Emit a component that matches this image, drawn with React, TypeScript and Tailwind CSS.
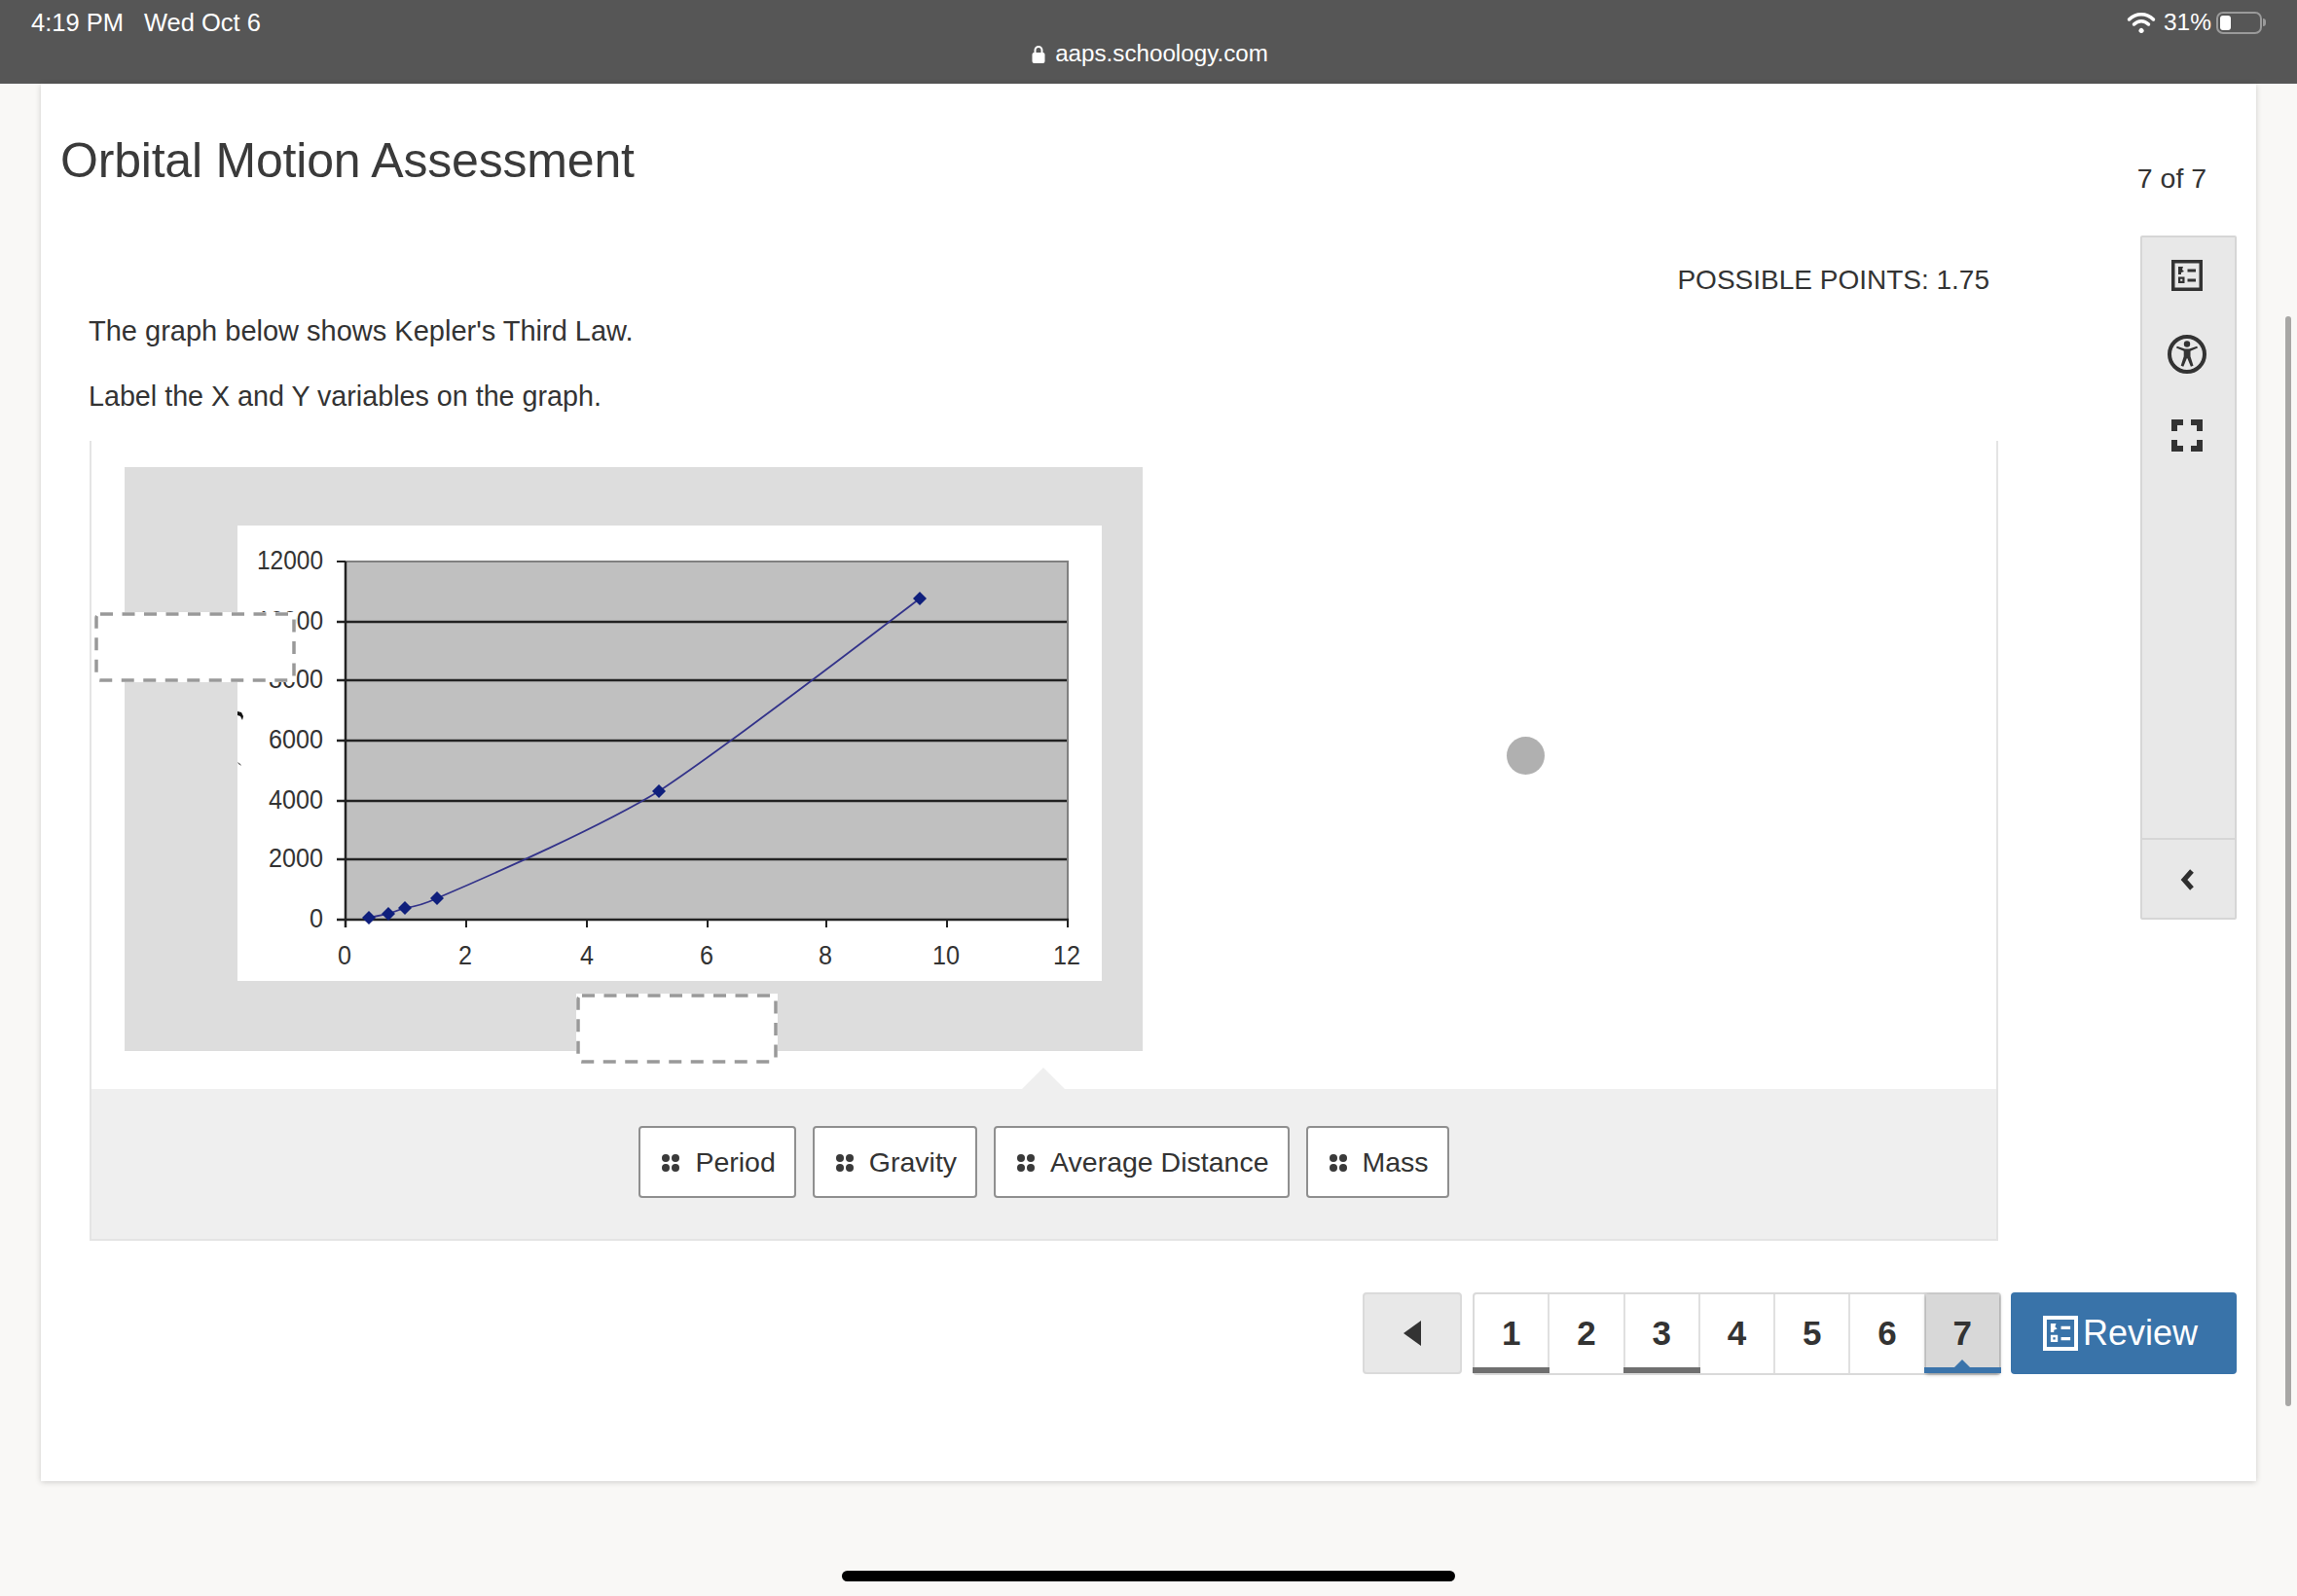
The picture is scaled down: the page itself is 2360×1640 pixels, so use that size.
const pages = [
  { n: 1, bar: 'gray' },
  { n: 2 },
  { n: 3, bar: 'gray' },
  { n: 4 },
  { n: 5 },
  { n: 6 },
  { n: 7, current: true },
];

const chips = ['Period', 'Gravity', 'Average Distance', 'Mass'];

const yLabels = [
  { t: '12000', y: 575, w: 68 },
  { t: '10000', y: 637, w: 68 },
  { t: '8000', y: 697, w: 56 },
  { t: '6000', y: 759, w: 56 },
  { t: '4000', y: 821, w: 56 },
  { t: '2000', y: 881, w: 56 },
  { t: '0', y: 943, w: 14 },
];

const xLabels = [
  { t: '0', x: 354, w: 14 },
  { t: '2', x: 478, w: 14 },
  { t: '4', x: 603, w: 14 },
  { t: '6', x: 726, w: 14 },
  { t: '8', x: 848, w: 14 },
  { t: '10', x: 972, w: 28 },
  { t: '12', x: 1096, w: 28 },
];

const markers = [
  [379, 943],
  [399, 939],
  [416, 933],
  [449, 923],
  [677, 813],
  [945, 615],
];

const ListIcon = ({ className }: { className: string }) => (
  <svg viewBox="0 0 32 32" className={className} fill="currentColor">
    <path fillRule="evenodd" d="M0 0h32v32H0zM3.500 3.500v25h25v-25z" />
    <path d="M7 7h5l-1 3 2 2-3 1v2H7z" />
    <path d="M16.500 9.500h8.500v3h-8.500zM16.500 19.500h8.500v3h-8.500z" />
    <path fillRule="evenodd" d="M7 17.500h6.500V24H7zM9.200 19.700v2.100h2.100v-2.100z" />
  </svg>
);

const DropZone = ({ className }: { className: string }) => (
  <div className={`absolute w-[207px] h-[72px] bg-white ${className}`}>
    <svg width="207" height="72" className="block">
      <rect x="2" y="2" width="203" height="68" rx="4" fill="none" stroke="#999999" strokeWidth="3.500" strokeDasharray="13 9.500" />
    </svg>
  </div>
);

const Chart = () => (
  <svg width="888" height="468" viewBox="244 540 888 468" className="block bg-white" style={{ fontFamily: '"Liberation Sans", Arial, sans-serif' }}>
    <rect x="355" y="577" width="742" height="368" fill="#c0c0c0" stroke="#808080" strokeWidth="2" />
    {[639, 699, 761, 823, 883].map((y) => (
      <line key={y} x1="346" x2="1096" y1={y} y2={y} stroke="#222222" strokeWidth="2.500" />
    ))}
    <line x1="346" x2="355" y1="577" y2="577" stroke="#222222" strokeWidth="2" />
    <line x1="346" x2="1098" y1="945" y2="945" stroke="#222222" strokeWidth="2.500" />
    <line x1="355" x2="355" y1="577" y2="953" stroke="#222222" strokeWidth="2.500" />
    {[355, 479, 603, 727, 849, 973, 1097].map((x) => (
      <line key={x} x1={x} x2={x} y1="945" y2="953" stroke="#222222" strokeWidth="2" />
    ))}
    {yLabels.map((l) => (
      <text key={l.t} x={332} y={l.y + 10} textAnchor="end" fontSize="28" fill="#333333" textLength={l.w} lengthAdjust="spacingAndGlyphs">
        {l.t}
      </text>
    ))}
    {xLabels.map((l) => (
      <text key={l.x} x={l.x} y={991} textAnchor="middle" fontSize="28" fill="#333333" textLength={l.w} lengthAdjust="spacingAndGlyphs">
        {l.t}
      </text>
    ))}
    <path
      d="M379 943L399 939L416 933Q432 931 449 923C510 897 620 848 677 813C730 778 860 680 945 615"
      fill="none"
      stroke="#33338a"
      strokeWidth="1.800"
    />
    {markers.map(([x, y]) => (
      <path key={x} d={`M${x} ${y - 7}L${x + 7} ${y}L${x} ${y + 7}L${x - 7} ${y}Z`} fill="#0f1f7c" />
    ))}
    <path d="M244 731l4 1 2 4-1 4-2-4-3-1z" fill="#111111" />
    <path d="M244 783l3 2 1 2-3-2z" fill="#555555" />
  </svg>
);

export default function App() {
  return (
    <div className="relative w-[2360px] h-[1640px] overflow-hidden bg-[#f9f8f6] text-[#333333] font-['Liberation_Sans',Arial,sans-serif]">
      {/* status bar */}
      <div className="h-[86px] bg-[#565656] text-white text-[25.500px] flex flex-col">
        <div className="flex justify-between h-[41px] pl-[32px] pr-[32px] pt-[8px] leading-[30px]">
          <div className="flex gap-[21px]">
            <span>4:19 PM</span>
            <span>Wed Oct 6</span>
          </div>
          <div className="flex items-center gap-[8px] h-[30px]">
            <svg width="30" height="22" viewBox="0 0 30 22" fill="none" stroke="white" strokeWidth="3.500" strokeLinecap="round">
              <path d="M2.500 8c7-7 18-7 25 0" />
              <path d="M7.500 13c4.500-4.500 10.500-4.500 15 0" />
              <path d="M15 19.500l.1.1" strokeWidth="5" />
            </svg>
            <span className="text-[24.500px]">31%</span>
            <div className="flex items-center -ml-[3px]">
              <div className="w-[47px] h-[23px] border-2 border-[#9a9a9a] rounded-[7px] p-[2px]">
                <div className="w-[11px] h-full bg-white rounded-[3px]" />
              </div>
              <div className="w-[3px] h-[8px] bg-[#9a9a9a] rounded-r-full ml-[1px]" />
            </div>
          </div>
        </div>
        <div className="flex justify-center items-center gap-[10px] pl-[3px] text-[24.200px] leading-[28px]">
          <svg width="14" height="19" viewBox="0 0 14 19">
            <path d="M3.500 9V5.500a3.500 3.500 0 0 1 7 0V9" fill="none" stroke="white" strokeWidth="2" />
            <rect x="0.500" y="8" width="13" height="11" rx="2" fill="white" />
          </svg>
          <span>aaps.schoology.com</span>
        </div>
      </div>

      {/* card */}
      <div className="ml-[42px] w-[2276px] h-[1436px] bg-white shadow-[0_1px_6px_rgba(0,0,0,0.18)] pl-[20px] pr-[20px] flex flex-col">
        <div className="h-[156px] flex justify-between">
          <h1 className="mt-[49px] text-[50px] leading-[60px] text-[#3a3a3a] tracking-[-0.2px]">Orbital Motion Assessment</h1>
          <div className="mt-[79px] mr-[17px] w-[99px] text-center text-[28.500px] leading-[36px]">7 of 7</div>
        </div>

        <div className="flex justify-between items-start">
          <div className="ml-[29px] w-[1962px]">
            <div className="mt-[30px] pr-[9px] text-right text-[28px] leading-[32px]">POSSIBLE POINTS: 1.75</div>
            <p className="mt-[20px] text-[29px] leading-[32px]">The graph below shows Kepler's Third Law.</p>
            <p className="mt-[35px] text-[28.700px] leading-[32px]">Label the X and Y variables on the graph.</p>

            <div className="mt-[30px] ml-[1px] w-[1961px] border-x-2 border-b-2 border-[#e4e4e4]">
              <div className="relative h-[666px] pt-[27px] pl-[34px]">
                <div className="relative w-[1046px] h-[600px] bg-[#dddddd] pt-[60px] pl-[116px]">
                  <Chart />
                  <DropZone className="-left-[31px] top-[149px]" />
                  <DropZone className="left-[464px] top-[541px]" />
                </div>
                <div className="absolute left-[1454px] top-[304px] w-[39px] h-[39px] rounded-full bg-[#b0b0b0]" />
              </div>

              <div className="relative h-[154px] bg-[#efefef] pt-[38px] flex justify-center gap-[17px]">
                <div className="absolute left-[956px] -top-[22px] w-0 h-0 border-l-[22px] border-r-[22px] border-b-[22px] border-x-transparent border-b-[#efefef]" />
                {chips.map((chip) => (
                  <div key={chip} className="h-[74px] flex items-center gap-[16px] pl-[22px] pr-[19px] pt-[1px] bg-white border-2 border-[#8f8f8f] rounded-[4px] text-[28.500px]">
                    <span className="grid grid-cols-2 gap-[2px]">
                      <i className="w-[8px] h-[8px] rounded-full bg-[#3a3a3a]" />
                      <i className="w-[8px] h-[8px] rounded-full bg-[#3a3a3a]" />
                      <i className="w-[8px] h-[8px] rounded-full bg-[#3a3a3a]" />
                      <i className="w-[8px] h-[8px] rounded-full bg-[#3a3a3a]" />
                    </span>
                    {chip}
                  </div>
                ))}
              </div>
            </div>
          </div>

          {/* side tools */}
          <div className="w-[99px] h-[703px] bg-[#e8e8e8] border-2 border-[#d6d6d6] rounded-[2px] flex flex-col items-center text-[#333333]">
            <div className="flex-1 flex flex-col items-center pt-[23px] pr-[3px]">
              <ListIcon className="w-[32px] h-[32px]" />
              <svg width="40" height="40" viewBox="0 0 40 40" className="mt-[45px]" fill="currentColor">
                <circle cx="20" cy="20" r="18" fill="none" stroke="currentColor" strokeWidth="4" />
                <circle cx="20" cy="9.500" r="3.200" />
                <path d="M9 13.500l.8-1.800 8 2.700h4.400l8-2.700.8 1.800-7.500 3.200v5.500l3 9.500-2.600 1-3.500-8.500h-.6l-3.500 8.500-2.600-1 3-9.500v-5.500z" />
              </svg>
              <svg width="32" height="33" viewBox="0 0 32 33" className="mt-[47px]" fill="currentColor">
                <path d="M0 0h12v6H6v6H0zM20 0h12v12h-6V6h-6zM0 21h6v6h6v6H0zM26 21h6v12H20v-6h6z" />
              </svg>
            </div>
            <div className="h-[82px] w-full border-t-2 border-[#d6d6d6] flex items-center justify-center pr-[3px] pt-[2px]">
              <svg width="14" height="22" viewBox="0 0 14 22" fill="none" stroke="#2f2f2f" strokeWidth="5">
                <path d="M12 2L4 11l8 9" />
              </svg>
            </div>
          </div>
        </div>

        {/* question nav */}
        <div className="mt-[53px] flex justify-end">
          <div className="w-[102px] h-[84px] bg-[#e8e8e8] border-2 border-[#dadada] rounded-[4px] flex items-center justify-center">
            <svg width="18" height="26" viewBox="0 0 18 26">
              <path d="M18 0v26L0 13z" fill="#333333" />
            </svg>
          </div>
          <div className="ml-[11px] w-[543px] h-[85px] flex border-2 border-[#dadada] rounded-[4px] bg-white">
            {pages.map((p) => (
              <div
                key={p.n}
                className={
                  p.current
                    ? 'relative flex-1 flex items-center justify-center bg-[#d8d8d8] text-[35px] font-bold shadow-[0_1px_4px_rgba(0,0,0,0.4)]'
                    : 'relative flex-1 flex items-center justify-center border-r-2 border-[#e0e0e0] text-[35px] font-bold'
                }
              >
                {p.n}
                {p.bar && <div className="absolute -left-[2px] -right-[2px] bottom-0 h-[6px] bg-[#6f6f6f]" />}
                {p.current && (
                  <>
                    <div className="absolute -left-[2px] -right-[2px] bottom-0 h-[6px] bg-[#3b74ab]" />
                    <div className="absolute left-1/2 -ml-[8px] bottom-[6px] w-0 h-0 border-l-[8px] border-r-[8px] border-b-[8px] border-x-transparent border-b-[#3b74ab]" />
                  </>
                )}
              </div>
            ))}
          </div>
          <div className="ml-[10px] w-[232px] h-[84px] bg-[#3973a9] rounded-[4px] text-white flex items-center pl-[33px] gap-[5px] text-[36px]">
            <ListIcon className="w-[36px] h-[36px]" />
            <span>Review</span>
          </div>
        </div>
      </div>

      {/* page scrollbar and home indicator */}
      <div className="absolute left-[2348px] top-[325px] w-[6px] h-[1120px] rounded-full bg-[#a8a7a5]" />
      <div className="absolute left-[865px] top-[1614px] w-[630px] h-[11px] rounded-full bg-black" />
    </div>
  );
}
